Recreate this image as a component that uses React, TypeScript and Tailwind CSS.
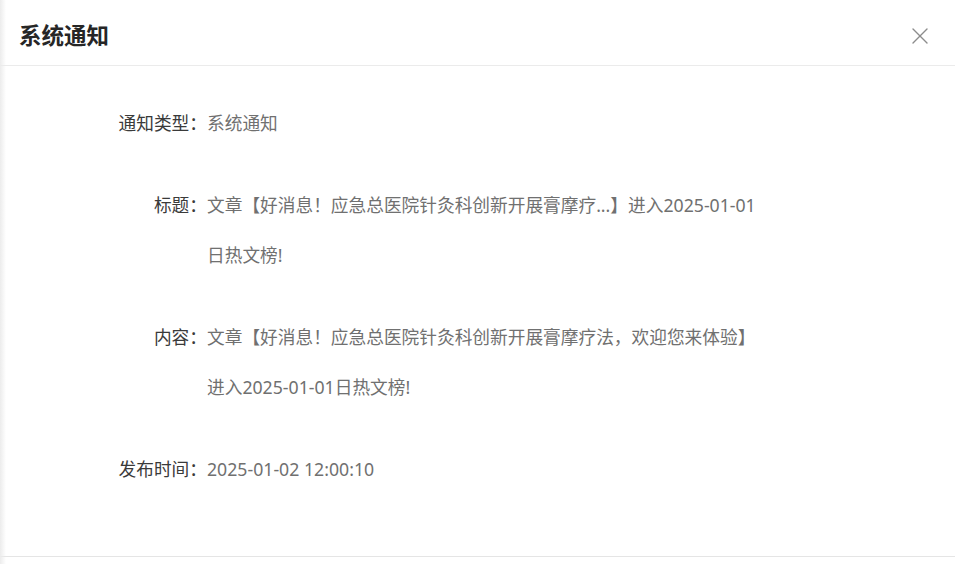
import { X } from 'lucide-react'

const rows: { label: string; lines: string[] }[] = [
  { label: '通知类型：', lines: ['系统通知'] },
  { label: '标题：', lines: ['文章【好消息！应急总医院针灸科创新开展膏摩疗...】进入2025-01-01', '日热文榜!'] },
  { label: '内容：', lines: ['文章【好消息！应急总医院针灸科创新开展膏摩疗法，欢迎您来体验】', '进入2025-01-01日热文榜!'] },
  { label: '发布时间：', lines: ['2025-01-02 12:00:10'] },
]

export default function App() {
  return (
    <div
      className="relative w-[955px] h-[564px] bg-white flex flex-col overflow-hidden"
      style={{ fontFamily: '"Noto Sans", "Noto Sans CJK SC", sans-serif' }}
    >
      <div className="pointer-events-none absolute inset-y-0 left-0 w-[6px] bg-gradient-to-r from-[#ececec] to-transparent" />

      <div className="h-[66px] shrink-0 flex items-center justify-between pt-[6px] pl-[19px] pr-[21px] border-b border-[#ebebeb]">
        <h1 className="text-[22.5px] font-bold text-[#262626]">系统通知</h1>
        <X className="w-[28px] h-[28px] text-[#8c8c8c]" strokeWidth={1.2} />
      </div>

      <div className="flex-1 pt-[32px] flex flex-col gap-[32px]">
        {rows.map(row => (
          <div key={row.label} className="grid grid-cols-[207px_1fr] text-[17.7px] leading-[50px]">
            <div className="text-right text-[#3a3a3a]">{row.label}</div>
            <div className="text-[#707070] whitespace-nowrap">
              {row.lines.map(l => (
                <div key={l}>{l}</div>
              ))}
            </div>
          </div>
        ))}
      </div>

      <div className="h-[8px] shrink-0 border-t border-[#e5e5e5]" />
    </div>
  )
}
